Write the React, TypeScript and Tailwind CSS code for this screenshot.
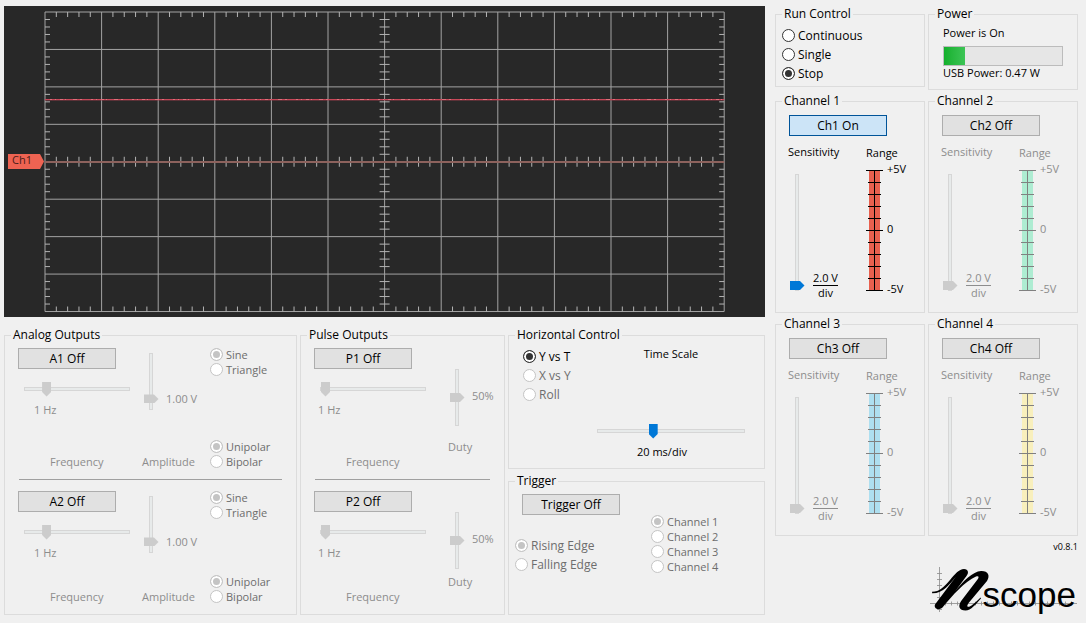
import { useState, type ReactNode } from "react";

const vSlider =
  "block w-[15px] shrink-0 appearance-none bg-transparent [writing-mode:vertical-lr] [direction:rtl] [&::-webkit-slider-runnable-track]:w-[4px] [&::-webkit-slider-runnable-track]:border [&::-webkit-slider-runnable-track]:border-[#d6d6d6] [&::-webkit-slider-runnable-track]:bg-[#e7eaea] [&::-webkit-slider-thumb]:ml-[-6px] [&::-webkit-slider-thumb]:h-[9px] [&::-webkit-slider-thumb]:w-[15px] [&::-webkit-slider-thumb]:appearance-none [&::-webkit-slider-thumb]:bg-[#0078d7] [&::-webkit-slider-thumb]:[clip-path:polygon(0_0,70%_0,100%_50%,70%_100%,0_100%)] disabled:[&::-webkit-slider-thumb]:bg-[#cccccc]";

const hSlider =
  "block h-[15px] appearance-none bg-transparent [&::-webkit-slider-runnable-track]:h-[4px] [&::-webkit-slider-runnable-track]:border [&::-webkit-slider-runnable-track]:border-[#d6d6d6] [&::-webkit-slider-runnable-track]:bg-[#e7eaea] [&::-webkit-slider-thumb]:mt-[-6px] [&::-webkit-slider-thumb]:h-[15px] [&::-webkit-slider-thumb]:w-[9px] [&::-webkit-slider-thumb]:appearance-none [&::-webkit-slider-thumb]:bg-[#0078d7] [&::-webkit-slider-thumb]:[clip-path:polygon(0_0,100%_0,100%_70%,50%_100%,0_70%)] disabled:[&::-webkit-slider-thumb]:bg-[#cccccc]";

function Group({ title, className = "", children }: { title: string; className?: string; children: ReactNode }) {
  return (
    <fieldset className={`min-w-0 border border-[#dcdcdc] ${className}`}>
      <legend className="ml-[6px] px-[2px] leading-4">{title}</legend>
      {children}
    </fieldset>
  );
}

function PushButton({ label, on = false }: { label: string; on?: boolean }) {
  return (
    <button
      type="button"
      className={`block h-[21px] w-[98px] border text-center text-[12px] leading-[19px] text-black ${
        on ? "border-[#005499] bg-[#cce4f7]" : "border-[#adadad] bg-[#e1e1e1]"
      }`}
    >
      {label}
    </button>
  );
}

type RadioProps = { name: string; label: string; checked?: boolean; disabled?: boolean; tall?: boolean };

function Radio({ name, label, checked = false, disabled = false, tall = false }: RadioProps) {
  return (
    <label
      className={`flex items-center gap-[3px] whitespace-nowrap ${tall ? "h-[19px] text-[12px]" : "h-[15px] text-[11px]"} ${
        disabled ? "text-[#6d6d6d]" : "text-black"
      }`}
    >
      <input
        type="radio"
        name={name}
        defaultChecked={checked}
        disabled={disabled}
        className="size-[13px] shrink-0 appearance-none rounded-full border border-[#333333] bg-white checked:bg-[#333333] checked:shadow-[inset_0_0_0_2px_white] disabled:border-[#c4c4c4] disabled:checked:bg-[#c4c4c4]"
      />
      {label}
    </label>
  );
}

const GRID = { left: 41, top: 6, dx: 56.6, dy: 37.44, cols: 12, rows: 8 };

function ScopeDisplay() {
  const { left, top, dx, dy, cols, rows } = GRID;
  const right = left + dx * cols;
  const bottom = top + dy * rows;
  const midX = left + (dx * cols) / 2;
  const midY = top + (dy * rows) / 2;
  const lines: string[] = [];
  for (let i = 0; i <= cols; i++) lines.push(`M${left + i * dx} ${top}V${bottom}`);
  for (let j = 0; j <= rows; j++) {
    if (j !== rows / 2) lines.push(`M${left} ${top + j * dy}H${right}`);
  }
  const ticks: string[] = [];
  for (let i = 1; i < cols * 5; i++) {
    if (i % 5 === 0) continue;
    const x = left + (i * dx) / 5;
    ticks.push(`M${x} ${top}v5M${x} ${midY - 5}v10M${x} ${bottom - 5}v5`);
  }
  for (let j = 1; j < rows * 5; j++) {
    if (j % 5 === 0) continue;
    const y = top + (j * dy) / 5;
    ticks.push(`M${left} ${y}h5M${midX - 5} ${y}h10M${right - 5} ${y}h5`);
  }
  return (
    <svg viewBox="0 0 761 311" className="block h-auto w-full bg-[#282828]" role="img" aria-label="Oscilloscope display">
      <path d={lines.join("")} stroke="#a3a3a3" strokeWidth="1" fill="none" />
      <path d={ticks.join("")} stroke="#b4b4b4" strokeWidth="1" fill="none" />
      <path d={`M${left} 156H${right}`} stroke="#8d625d" strokeWidth="2" />
      <path d={`M${left} 93.5H${right}`} stroke="#dc4c60" strokeWidth="1" />
      <path d={`M${left} 94H${right}`} stroke="#a8404e" strokeWidth="2" opacity="0.4" />
      <path d={`M${left + 5} 93.5H${right}`} stroke="#ee8a92" strokeWidth="1" strokeDasharray="2 3 1 4 3 2 1 7 4 3 2 9" opacity="0.6" />
      <path d="M4 148H36L40 155.500L36 163H4Z" fill="#ee6352" />
      <text x="8" y="158" fontSize="11" fill="#4a1d18">
        Ch1
      </text>
    </svg>
  );
}

function AnalogBlock({ id, className }: { id: string; className: string }) {
  return (
    <div className={`flex text-[11px] text-[#8d8d8d] ${className}`}>
      <div className="flex w-[124px] shrink-0 flex-col pt-px">
        <PushButton label={`${id} Off`} />
        <input id={`${id}-freq`} type="range" disabled defaultValue={18} className={`mt-[12px] ml-[6px] w-[106px] ${hSlider}`} />
        <output className="mt-[6px] ml-4">1 Hz</output>
        <label htmlFor={`${id}-freq`} className="mt-auto ml-8">
          Frequency
        </label>
      </div>
      <div className="flex w-[68px] shrink-0 flex-col pt-[6px]">
        <div className="flex items-end gap-[8px] pl-px">
          <input id={`${id}-amp`} type="range" disabled defaultValue={12} className={`h-[57px] ${vSlider}`} />
          <output className="pb-[3px] whitespace-nowrap">1.00 V</output>
        </div>
        <label htmlFor={`${id}-amp`} className="mt-auto">
          Amplitude
        </label>
      </div>
      <div className="flex flex-col justify-between pb-px">
        <div>
          <Radio name={`${id}-wave`} label="Sine" checked disabled />
          <Radio name={`${id}-wave`} label="Triangle" disabled />
        </div>
        <div>
          <Radio name={`${id}-polarity`} label="Unipolar" checked disabled />
          <Radio name={`${id}-polarity`} label="Bipolar" disabled />
        </div>
      </div>
    </div>
  );
}

function PulseBlock({ id, className }: { id: string; className: string }) {
  return (
    <div className={`flex text-[11px] text-[#8d8d8d] ${className}`}>
      <div className="flex w-[134px] shrink-0 flex-col pt-px">
        <PushButton label={`${id} Off`} />
        <input id={`${id}-freq`} type="range" disabled defaultValue={0} className={`mt-[12px] ml-[6px] w-[106px] ${hSlider}`} />
        <output className="mt-[6px] ml-[4px]">1 Hz</output>
        <label htmlFor={`${id}-freq`} className="mt-auto ml-8">
          Frequency
        </label>
      </div>
      <div className="flex flex-col pt-[22px] pb-[15px]">
        <div className="flex items-center gap-[8px] pl-px">
          <input id={`${id}-duty`} type="range" disabled defaultValue={50} className={`h-[57px] ${vSlider}`} />
          <output className="pb-[3px]">50%</output>
        </div>
        <label htmlFor={`${id}-duty`} className="mt-auto">
          Duty
        </label>
      </div>
    </div>
  );
}

function RangeGauge({ fill, line }: { fill: string; line: string }) {
  const ticks = Array.from({ length: 11 }, (_, i) =>
    i % 5 === 0 ? `M0 ${i * 12 + 0.5}h17` : `M2 ${i * 12 + 0.5}h13`,
  ).join("");
  return (
    <svg width="17" height="121" viewBox="0 0 17 121" className="mt-[9px] shrink-0" aria-hidden="true">
      <rect x="3" y="0" width="11" height="121" fill={fill} />
      <path d={`M8.500 0V121${ticks}`} stroke={line} fill="none" />
    </svg>
  );
}

function Channel({ n, fill, active = false }: { n: number; fill: string; active?: boolean }) {
  return (
    <Group title={`Channel ${n}`} className="h-[220px]">
      <div className="pt-[6px] pl-[13px]">
        <PushButton label={active ? `Ch${n} On` : `Ch${n} Off`} on={active} />
      </div>
      <div className={`flex pl-3 text-[11px] ${active ? "text-black" : "text-[#8d8d8d]"}`}>
        <div className="w-[78px] pt-[8px]">
          <label htmlFor={`sens-${n}`} className="block">
            Sensitivity
          </label>
          <div className="flex items-end gap-[9px] pt-[14px] pl-px">
            <input id={`sens-${n}`} type="range" disabled={!active} defaultValue={0} className={`h-[117px] ${vSlider}`} />
            <output className="-mb-[9px] flex flex-col text-center leading-[14px]">
              <span className="border-b border-current">2.0 V</span>
              <span>div</span>
            </output>
          </div>
        </div>
        <div className="pt-[9px]">
          <div>Range</div>
          <div className="flex gap-[4px]">
            <RangeGauge fill={fill} line={active ? "#000000" : "#808080"} />
            <div className="flex h-[136px] flex-col justify-between">
              <span>+5V</span>
              <span>0</span>
              <span>-5V</span>
            </div>
          </div>
        </div>
      </div>
    </Group>
  );
}

function Logo() {
  return (
    <div className="mt-2 flex items-end justify-end" aria-label="nScope">
      <div className="relative h-[50px] w-[148px]">
        <svg viewBox="0 0 148 50" className="absolute inset-0 size-full" aria-hidden="true">
          <path
            d="M9.500 1V46M0 37.500H147M7 7.500h5M7 13.500h5M7 19.500h5M7 31.500h5M7 43.500h5M15.500 35.500v4M21.500 35.500v4M27.500 35.500v4M45.500 35.500v4M51.500 35.500v4M57.500 35.500v4M63.500 35.500v4M69.500 35.500v4M75.500 35.500v4M81.500 35.500v4M87.500 35.500v4M93.500 35.500v4M99.500 35.500v4M105.500 35.500v4M111.500 35.500v4M117.500 35.500v4M123.500 35.500v4M129.500 35.500v4M135.500 35.500v4M141.500 35.500v4"
            stroke="#8a8a8a"
            strokeWidth="0.8"
            fill="none"
          />
          <path
            d="M2 25.800C9 26 14 21 20 14C25 8 29 3 34 3C38.500 3 39 7 36.500 10L25 25.500C33 15 43 5.500 51 5C58 4.700 60.500 9.500 57 15L39 36.500C35.500 41 38 42 41.500 39.500C45 37 48 34 50.500 31.500L51 32.500C46 38 41 44.500 35.500 44.500C29 44.500 27.500 40 31.500 34.500L47.500 13.500C49.500 10.500 48.500 9.500 46 10.500C35 15 22 30 12.500 41.500C8.500 45 3.500 42.500 5 38.500L26 10.500C20 18 13 27.500 2.200 27.300Z"
            fill="#000000"
          />
        </svg>
        <span className="absolute right-[2px] bottom-0 text-[35px] leading-[42px] [font-family:'Liberation_Sans',Arial,sans-serif]">
          scope
        </span>
      </div>
    </div>
  );
}

export default function App() {
  const [timeScale, setTimeScale] = useState(37);
  return (
    <main className="flex min-h-screen items-start gap-[10px] bg-[#f0f0f0] pt-[6px] pr-2 pl-1 text-[12px] leading-4 text-black [font-family:'Open_Sans','Noto_Sans',sans-serif]">
      <div className="flex min-w-0 flex-1 flex-col gap-[10px]">
        <ScopeDisplay />
        <div className="grid grid-cols-[293fr_205fr_257fr] gap-[3px]">
          <Group title="Analog Outputs">
            <div className="px-[13px] pt-[4px] pb-[9px]">
              <AnalogBlock id="A1" className="h-[123px]" />
              <hr className="mx-px mt-[9px] mb-[10px] border-[#a0a0a0]" />
              <AnalogBlock id="A2" className="h-[115px]" />
            </div>
          </Group>
          <Group title="Pulse Outputs">
            <div className="px-[13px] pt-[4px] pb-[9px]">
              <PulseBlock id="P1" className="h-[123px]" />
              <hr className="mx-px mt-[9px] mb-[10px] border-[#a0a0a0]" />
              <PulseBlock id="P2" className="h-[115px]" />
            </div>
          </Group>
          <div className="flex flex-col gap-[4px]">
            <Group title="Horizontal Control" className="h-[142px]">
              <div className="flex justify-between pt-[3px] pr-[19px] pl-[14px]">
                <div className="pt-px">
                  <Radio name="mode" label="Y vs T" checked tall />
                  <Radio name="mode" label="X vs Y" disabled tall />
                  <Radio name="mode" label="Roll" disabled tall />
                </div>
                <div className="flex w-[148px] flex-col">
                  <label htmlFor="time-scale" className="self-center text-[11px]">
                    Time Scale
                  </label>
                  <input
                    id="time-scale"
                    type="range"
                    value={timeScale}
                    onChange={(e) => setTimeScale(Number(e.target.value))}
                    className={`mt-[61px] w-full ${hSlider}`}
                  />
                  <output className="mt-[6px] ml-10 text-[11px]">20 ms/div</output>
                </div>
              </div>
            </Group>
            <Group title="Trigger" className="h-[142px]">
              <div className="flex gap-[31px] pt-[5px] pl-[6px]">
                <div>
                  <div className="pl-[7px]">
                    <PushButton label="Trigger Off" />
                  </div>
                  <div className="pt-[21px]">
                    <Radio name="edge" label="Rising Edge" checked disabled tall />
                    <Radio name="edge" label="Falling Edge" disabled tall />
                  </div>
                </div>
                <div className="pt-5">
                  <Radio name="source" label="Channel 1" checked disabled />
                  <Radio name="source" label="Channel 2" disabled />
                  <Radio name="source" label="Channel 3" disabled />
                  <Radio name="source" label="Channel 4" disabled />
                </div>
              </div>
            </Group>
          </div>
        </div>
      </div>

      <aside className="flex w-[303px] shrink-0 flex-col gap-[3px]">
        <div className="grid grid-cols-2 items-start gap-[3px]">
          <Group title="Run Control">
            <div className="pt-[4px] pb-[3px] pl-[6px]">
              <Radio name="run" label="Continuous" tall />
              <Radio name="run" label="Single" tall />
              <Radio name="run" label="Stop" checked tall />
            </div>
          </Group>
          <Group title="Power">
            <div className="flex flex-col px-[14px] pt-[3px] pb-[8px] text-[11px]">
              <span>Power is On</span>
              <progress
                aria-label="USB power"
                max={100}
                value={18}
                className="mt-[5px] block h-5 w-full appearance-none border border-[#bcbcbc] [&::-webkit-progress-bar]:bg-[#e6e6e6] [&::-webkit-progress-value]:bg-linear-to-r [&::-webkit-progress-value]:from-[#12b02c] [&::-webkit-progress-value]:to-[#3cc455]"
              />
              <span className="-mt-px whitespace-nowrap">USB Power: 0.47 W</span>
            </div>
          </Group>
        </div>
        <div className="grid grid-cols-2 gap-[3px]">
          <Channel n={1} fill="#e8604f" active />
          <Channel n={2} fill="#aeecd2" />
          <Channel n={3} fill="#aedff0" />
          <Channel n={4} fill="#f8efbc" />
        </div>
        <span className="self-end text-[9px]">v0.8.1</span>
        <Logo />
      </aside>
    </main>
  );
}
